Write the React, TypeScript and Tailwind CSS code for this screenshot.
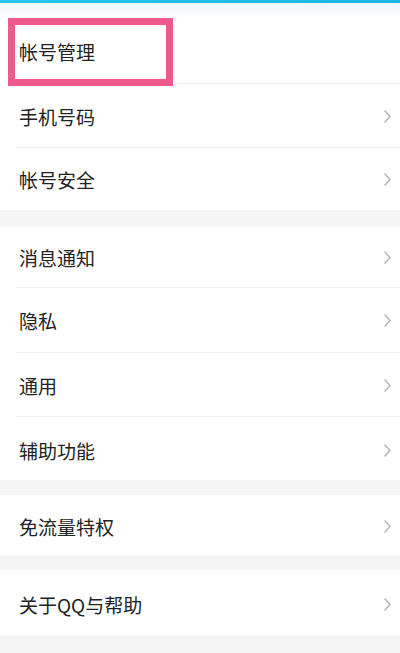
import React from "react";

function Chevron() {
  return (
    <svg width="9" height="15" viewBox="0 0 9 15" className="shrink-0">
      <path d="M2 2 L7 7.5 L2 13" fill="none" stroke="#b8b8b8" strokeWidth="1.6" strokeLinecap="round" strokeLinejoin="round" />
    </svg>
  );
}

function Row({ label, h, pt = "pt-[1px]", chevron = true, children }: { label: string; h: string; pt?: string; chevron?: boolean; children?: React.ReactNode }) {
  return (
    <div className={`relative flex items-center justify-between pl-[19px] pr-[8px] ${pt} ${h}`}>
      <span className="text-[19px] leading-none text-[#222222]">{label}</span>
      {chevron && <Chevron />}
      {children}
    </div>
  );
}

function Sep() {
  return <div className="ml-[16px] h-px bg-[#f2f2f2]" />;
}

export default function App() {
  return (
    <div className="w-[400px] h-[653px] overflow-hidden bg-[#f5f5f5] font-['Noto_Sans_CJK_SC',sans-serif]">
      <div className="h-[3px] bg-gradient-to-r from-[#22c8f2] to-[#1db6ee]" />
      <div className="h-[11px] bg-gradient-to-b from-[#eef9fc] to-[#f9fbfc]" />
      <div className="bg-white">
        <Row label="帐号管理" h="h-[69px]" pt="pt-[5px]" chevron={false}>
          <div className="absolute left-[8px] top-[4px] w-[165px] h-[68px] border-[7px] border-[#ee5a8e]" />
        </Row>
        <Sep />
        <Row label="手机号码" h="h-[63px]" />
        <Sep />
        <Row label="帐号安全" h="h-[62px]" />
      </div>
      <div className="h-[17px]" />
      <div className="bg-white">
        <Row label="消息通知" h="h-[60px]" />
        <Sep />
        <Row label="隐私" h="h-[64px]" />
        <Sep />
        <Row label="通用" h="h-[63px]" />
        <Sep />
        <Row label="辅助功能" h="h-[63px]" pt="pt-[3px]" />
      </div>
      <div className="h-[15px]" />
      <div className="bg-white">
        <Row label="免流量特权" h="h-[60px]" pt="pt-[2px]" />
      </div>
      <div className="h-[15px]" />
      <div className="bg-white">
        <Row label="关于QQ与帮助" h="h-[65px]" pt="pt-[3px]" />
      </div>
    </div>
  );
}
